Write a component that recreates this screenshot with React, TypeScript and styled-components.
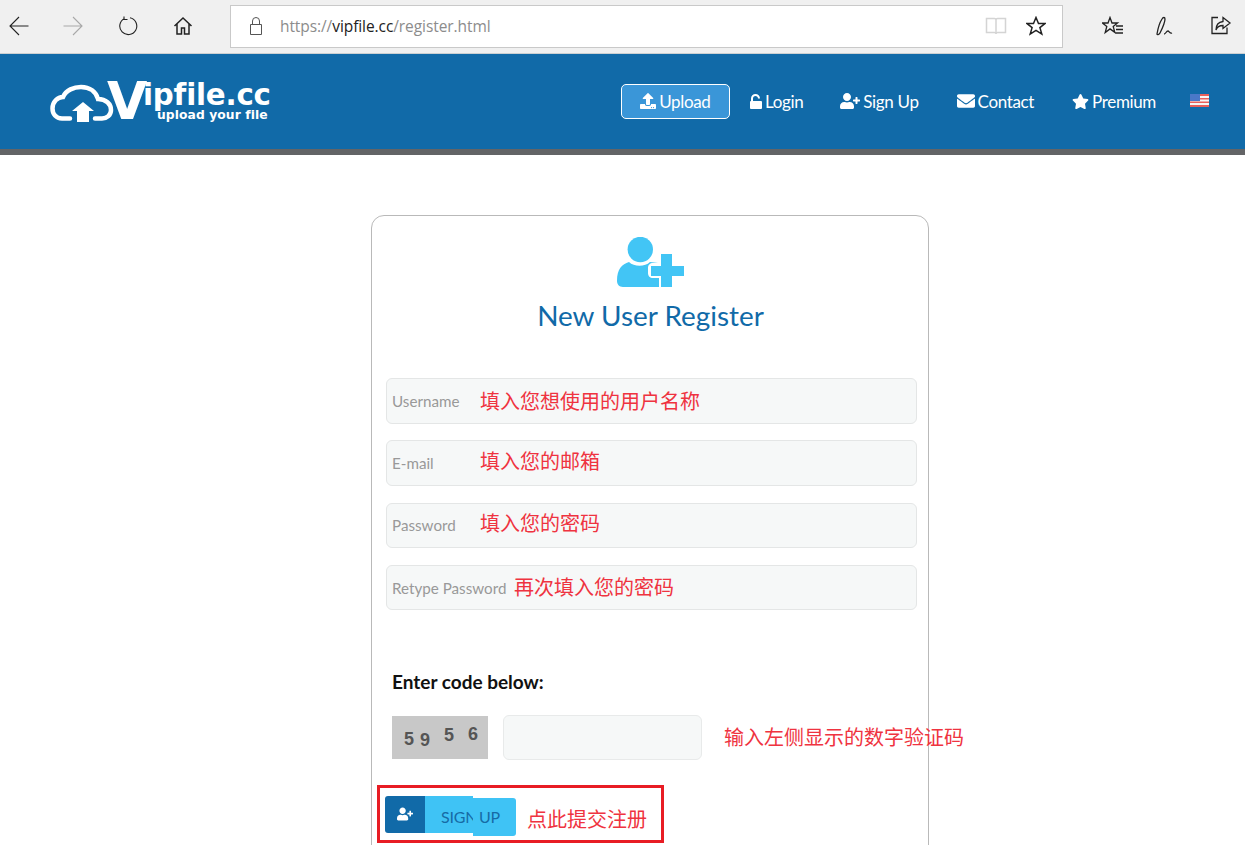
import React from 'react'
import styled, { createGlobalStyle } from 'styled-components'
import { FaUpload, FaUserPlus, FaEnvelope, FaStar } from 'react-icons/fa'

const GlobalStyle = createGlobalStyle`
  html, body {
    margin: 0;
    padding: 0;
    background: #fff;
    overflow: hidden;
  }
  * { box-sizing: border-box; }
`

const Page = styled.div`
  width: 1245px;
  height: 845px;
  overflow: hidden;
  font-family: Lato, "Liberation Sans", sans-serif;
`

/* browser chrome */
const Chrome = styled.div`
  height: 54px;
  display: flex;
  align-items: center;
  background: #f0f0f0;
  border-bottom: 1px solid #ccd0d2;
  padding: 0 0 1px;
`
const ChromeButton = styled.span<{ $w: number }>`
  width: ${p => p.$w}px;
  height: 24px;
  flex: none;
  display: flex;
  align-items: center;
  justify-content: center;
`
const AddressBar = styled.div`
  width: 833px;
  height: 43px;
  flex: none;
  margin: 0 21px 0 12px;
  display: flex;
  align-items: center;
  background: #fff;
  border: 1px solid #c9c9c9;
  padding: 0 16px 0 14px;
`
const Url = styled.div`
  flex: 1;
  margin-left: 13px;
  font: 15.5px "Open Sans", sans-serif;
  letter-spacing: -0.08px;
  color: #8c8c8c;
  b { font-weight: 400; color: #222; }
`

/* site header */
const SiteHeader = styled.header`
  height: 101px;
  display: flex;
  align-items: center;
  justify-content: space-between;
  background: #116aa8;
  border-bottom: 6px solid #636466;
  padding: 0 36px 0 50px;
`
const Logo = styled.div`
  display: flex;
  align-items: flex-start;
  color: #fff;
  margin-top: 1px;
`
const LogoV = styled.span`
  font: 700 52px/38px "DejaVu Sans", sans-serif;
  margin-left: -8px;
  width: 36px;
`
const LogoWords = styled.div`
  display: flex;
  flex-direction: column;
  align-items: flex-end;
`
const LogoName = styled.span`
  font: 700 29.3px/26px "DejaVu Sans", sans-serif;
  letter-spacing: -0.2px;
`
const LogoTag = styled.span`
  font: 700 12.3px/13px "DejaVu Sans", sans-serif;
  margin: 1px 3px 0 0;
  letter-spacing: 0.1px;
`
const Nav = styled.nav`
  display: flex;
  align-items: center;
`
const NavItem = styled.a<{ $boxed?: boolean; $gap: number }>`
  display: flex;
  align-items: center;
  gap: 3px;
  height: 35px;
  margin-left: ${p => p.$gap}px;
  padding: ${p => (p.$boxed ? '0 18.5px 1px' : '0 0 1px')};
  color: #fff;
  font-size: 17px;
  letter-spacing: -0.35px;
  background: ${p => (p.$boxed ? '#3a96d8' : 'transparent')};
  border: ${p => (p.$boxed ? '1px solid #fff' : 'none')};
  border-radius: 5px;
  svg { flex: none; }
`
const Flag = styled.svg`
  margin-left: 34px;
  margin-top: -3px;
`

/* register card */
const Card = styled.main`
  width: 558px;
  height: 700px;
  margin: 60px auto 0 371px;
  background: #fff;
  border: 1px solid #b9b9b9;
  border-radius: 13px;
  padding: 21px 11px 0 14px;
`
const CardHead = styled.div`
  display: flex;
  flex-direction: column;
  align-items: center;
  height: 141px;
  padding-right: 2px;
`
const Title = styled.h1`
  margin: 8px 0 0;
  font: 400 27.9px/36px Lato, sans-serif;
  color: #116aa8;
`
const Fields = styled.div`
  display: flex;
  flex-direction: column;
  gap: 16.8px;
`
const Field = styled.div`
  height: 45.5px;
  display: flex;
  align-items: center;
  padding-left: 5px;
  background: #f6f8f8;
  border: 1px solid #e4e6e6;
  border-radius: 6px;
`
const Placeholder = styled.span<{ $w: number }>`
  width: ${p => p.$w}px;
  flex: none;
  font-size: 15.2px;
  color: #999;
`
const Note = styled.span<{ $lift?: number }>`
  font: 400 20px/26px "Noto Sans CJK SC", sans-serif;
  color: #ef3340;
  white-space: nowrap;
  margin-bottom: ${p => (p.$lift ?? 0) * 2}px;
`
const CodeLabel = styled.div`
  margin: 60.6px 0 0 6px;
  font-size: 19px;
  line-height: 22px;
  font-weight: 700;
  color: #111;
`
const CodeRow = styled.div`
  display: flex;
  align-items: center;
  margin: 22px 0 0 6px;
`
const Captcha = styled.div`
  width: 96px;
  height: 43px;
  flex: none;
  display: flex;
  align-items: center;
  padding-left: 12px;
  background: #c8c8c8;
`
const Digit = styled.span<{ $w: number; $dy: number }>`
  width: ${p => p.$w}px;
  margin-top: ${p => p.$dy * 2}px;
  font: 700 18px/18px "Liberation Sans", sans-serif;
  color: #555;
`
const CodeInput = styled.div`
  width: 199px;
  height: 45px;
  flex: none;
  margin: 0 22px 0 15px;
  background: #f6f8f8;
  border: 1px solid #e8eaea;
  border-radius: 6px;
`
const SubmitBox = styled.div`
  width: 287px;
  height: 58px;
  display: flex;
  align-items: flex-start;
  margin: 25px 0 0 -9px;
  padding: 8px 0 0 5px;
  border: 3px solid #e81c24;
`
const ButtonIcon = styled.span`
  width: 40px;
  height: 37px;
  flex: none;
  display: flex;
  align-items: center;
  justify-content: center;
  background: #116aa8;
  color: #fff;
  border-radius: 3px 0 0 3px;
`
const ButtonPart = styled.span<{ $w: number; $drop: number; $pad: number }>`
  width: ${p => p.$w}px;
  height: ${p => (p.$drop ? 38 : 37)}px;
  flex: none;
  margin-top: ${p => p.$drop}px;
  padding-left: ${p => p.$pad}px;
  background: #3fc3f5;
  color: #166ba6;
  font-size: 16px;
  letter-spacing: -0.2px;
  line-height: ${p => 41 - p.$drop * 2}px;
  border-radius: ${p => (p.$drop ? '0 3px 3px 0' : '0')};
  white-space: nowrap;
`
const SubmitNote = styled(Note)`
  margin: 10px 0 0 11px;
`

const stroke = { fill: 'none', stroke: '#222', strokeWidth: 1.1 }

const Back = ({ color = '#222', flip = false }: { color?: string; flip?: boolean }) => (
  <svg width="20" height="20" viewBox="0 0 20 20" style={flip ? { transform: 'scaleX(-1)' } : undefined}>
    <path d="M10 1 1 10l9 9M1 10h18.500" fill="none" stroke={color} strokeWidth="1.100" />
  </svg>
)

const Star = ({ size = 20 }: { size?: number }) => (
  <svg width={size} height={size} viewBox="0 0 20 20" style={{ flex: 'none' }}>
    <path d="M10 1.500l2.500 6h6.500l-5.100 4.100 1.900 6.500-5.800-3.800-5.800 3.800 1.900-6.500L1 7.500h6.500z" {...stroke} strokeWidth="1.500" />
  </svg>
)

const Cloud = () => (
  <svg width="65" height="40" viewBox="0 0 65 40" style={{ flex: 'none' }}>
    <path
      d="M20 36.500H12C6 36.500 2.500 32 2.500 26.500 2.500 20 7.500 15 13 15 16 8 24 5 31 5c9 0 15 5 17 12 8 0 13 5 13 11 0 5-4 8.500-9 8.500h-7"
      fill="none"
      stroke="#fff"
      strokeWidth="4.500"
      strokeLinecap="round"
    />
    <path d="M33 20 44 29h-5v11H27V29h-5z" fill="#fff" />
  </svg>
)

const OpenLock = () => (
  <svg width="12" height="15" viewBox="0 0 12 15">
    <path d="M2 7V4.500a3.500 3.500 0 0 1 7 0" fill="none" stroke="#fff" strokeWidth="2" />
    <rect x="0" y="7" width="12" height="8" rx="1" fill="#fff" />
  </svg>
)

const UserPlusBig = () => (
  <svg width="68" height="52" viewBox="0 0 68 52">
    <circle cx="23.300" cy="12.500" r="12.700" fill="#42c5f5" />
    <path d="M0 44c0-12 5-17 12-19 5 5 16 5 21 0l8 1H36c-3 0-5 2-5 5v5c0 3 2 5 5 5h6v9H6c-4 0-6-3-6-6z" fill="#42c5f5" />
    <path d="M44 17h11v12h12v10H55v11H44V39H34V29h10z" fill="#42c5f5" />
  </svg>
)

const FlagIcon = () => (
  <Flag width="19" height="13" viewBox="0 0 19 13">
    <rect width="19" height="13" fill="#f6f6f6" />
    <path d="M0 0h19v2H0zM0 4h19v1.500H0zM0 7.500h19V9H0zM0 11h19v2H0z" fill="#e8605c" />
    <rect width="10" height="7" fill="#4a78c8" />
  </Flag>
)

const App = () => {
  return (
    <Page>
      <GlobalStyle />
      <Chrome>
        <ChromeButton $w={37}><Back /></ChromeButton>
        <ChromeButton $w={71}><Back color="#a8a8a8" flip /></ChromeButton>
        <ChromeButton $w={40}>
          <svg width="20" height="20" viewBox="0 0 20 20">
            <path d="M6.500 2.500A8.500 8.500 0 1 0 12 1.800M6 .5v3h3.500" {...stroke} />
          </svg>
        </ChromeButton>
        <ChromeButton $w={70}>
          <svg width="20" height="20" viewBox="0 0 20 20">
            <path d="M1.500 10 10 2l8.500 8M4 8v10h4.500v-6h3v6H16V8" {...stroke} strokeWidth="1.500" />
          </svg>
        </ChromeButton>
        <AddressBar>
          <svg width="22" height="22" viewBox="0 0 22 22" style={{ flex: 'none' }}>
            <path d="M5.500 9.500h11v10h-11zM7.500 9.500V6a3.500 3.500 0 0 1 7 0v3.500" fill="none" stroke="#555" strokeWidth="1" />
          </svg>
          <Url>https://<b>vipfile.cc</b>/register.html</Url>
          <svg width="22" height="20" viewBox="0 0 22 20" style={{ flex: 'none', marginRight: 19 }}>
            <path d="M1.500 2.500h8c1 0 1.500.5 1.500 1.500 0-1 .5-1.500 1.500-1.500h8v14h-8c-1 0-1.500.5-1.500 1.500 0-1-.5-1.500-1.500-1.500h-8zM11 4v14" fill="none" stroke="#d4d4d4" strokeWidth="1.500" />
          </svg>
          <Star />
        </AddressBar>
        <ChromeButton $w={58}>
          <svg width="22" height="20" viewBox="0 0 22 20">
            <path d="M8 1.500l2 5.500h5.500l-4.300 3.400 1.600 6-4.800-3.500L3.200 16.500l1.600-6L.5 7H6zM14 10h7M14 13.500h7M13 17h8" {...stroke} strokeWidth="1.300" />
          </svg>
        </ChromeButton>
        <ChromeButton $w={48}>
          <svg width="22" height="22" viewBox="0 0 22 22">
            <path d="M2 19c1-6 3-12 5-15 1-2 3-2 3 0 0 3-3 10-5 14-1 2-3 2-3 1zM9 19c2 0 2-3 4-3 1 0 2 3 4 2" {...stroke} strokeWidth="1.300" />
          </svg>
        </ChromeButton>
        <ChromeButton $w={62}>
          <svg width="22" height="20" viewBox="0 0 22 20">
            <path d="M8 1.500H2v16h15v-6M13 1.500l7 5.500-7 5.500V9.500C9 9.500 7 11 6 14c0-5 3-8 7-8.500z" {...stroke} strokeWidth="1.300" />
          </svg>
        </ChromeButton>
      </Chrome>

      <SiteHeader>
        <Logo>
          <Cloud />
          <LogoV>V</LogoV>
          <LogoWords>
            <LogoName>ipfile.cc</LogoName>
            <LogoTag>upload your file</LogoTag>
          </LogoWords>
        </Logo>
        <Nav>
          <NavItem $boxed $gap={0}><FaUpload size={16} />Upload</NavItem>
          <NavItem $gap={20}><OpenLock />Login</NavItem>
          <NavItem $gap={37}><FaUserPlus size={20} />Sign Up</NavItem>
          <NavItem $gap={38}><FaEnvelope size={18} />Contact</NavItem>
          <NavItem $gap={38}><FaStar size={17} />Premium</NavItem>
          <FlagIcon />
        </Nav>
      </SiteHeader>

      <Card>
        <CardHead>
          <UserPlusBig />
          <Title>New User Register</Title>
        </CardHead>
        <Fields>
          <Field><Placeholder $w={88}>Username</Placeholder><Note>填入您想使用的用户名称</Note></Field>
          <Field><Placeholder $w={88}>E-mail</Placeholder><Note $lift={2}>填入您的邮箱</Note></Field>
          <Field><Placeholder $w={88}>Password</Placeholder><Note $lift={2.5}>填入您的密码</Note></Field>
          <Field><Placeholder $w={122}>Retype Password</Placeholder><Note $lift={1}>再次填入您的密码</Note></Field>
        </Fields>
        <CodeLabel>Enter code below:</CodeLabel>
        <CodeRow>
          <Captcha>
            <Digit $w={16} $dy={1.5}>5</Digit>
            <Digit $w={24} $dy={2.5}>9</Digit>
            <Digit $w={24} $dy={-2.5}>5</Digit>
            <Digit $w={12} $dy={-3.5}>6</Digit>
          </Captcha>
          <CodeInput />
          <Note>输入左侧显示的数字验证码</Note>
        </CodeRow>
        <SubmitBox>
          <ButtonIcon><FaUserPlus size={16} /></ButtonIcon>
          <ButtonPart $w={48} $drop={0} $pad={16}>SIGN</ButtonPart>
          <ButtonPart $w={43} $drop={2} $pad={6}>UP</ButtonPart>
          <SubmitNote>点此提交注册</SubmitNote>
        </SubmitBox>
      </Card>
    </Page>
  )
}

export default App
